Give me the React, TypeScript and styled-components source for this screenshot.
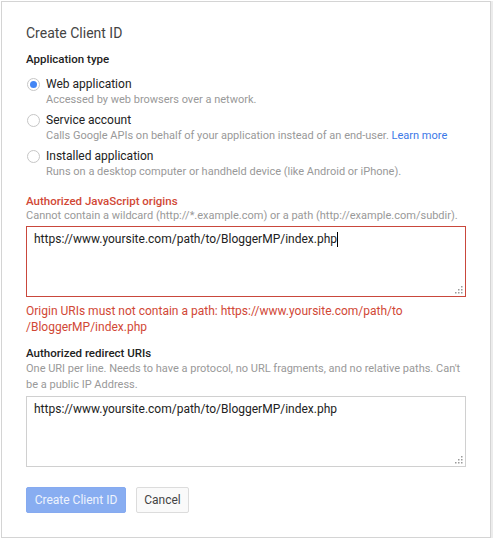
import React from "react";
import styled, { createGlobalStyle } from "styled-components";

const Global = createGlobalStyle`
  html, body { margin: 0; padding: 0; background: #fff; }
  body { font-family: Roboto, "Noto Sans", Arial, sans-serif; color: #222; }
`;

const Dialog = styled.div`
  box-sizing: border-box;
  margin: 1px 0 0 1px;
  width: 490px;
  height: 537px;
  border: 1px solid #d4d4d4;
  box-shadow: 2px 0 0 #ececec;
  padding: 21px 24px 0 24px;
  display: flex;
  flex-direction: column;
`;

const Title = styled.h1`
  margin: 0;
  font-size: 14px;
  font-weight: 400;
  line-height: 20px;
  color: #444;
`;

const SectionLabel = styled.div<{ $error?: boolean; $mt: number }>`
  margin-top: ${(p) => p.$mt}px;
  font-size: 11.5px;
  font-weight: 500;
  line-height: 15px;
  color: ${(p) => (p.$error ? "#d14836" : "#222")};
`;

const RadioList = styled.div`
  margin-top: 9px;
  display: flex;
  flex-direction: column;
  gap: 5px;
`;

const RadioRow = styled.div`
  display: grid;
  grid-template-columns: 20px 1fr;
  align-items: start;
`;

const RadioCircle = styled.span<{ $checked?: boolean }>`
  box-sizing: border-box;
  margin: 2px 0 0 1px;
  width: 13px;
  height: 13px;
  border-radius: 50%;
  border: 1px solid #c6c6c6;
  background: #fff;
  display: flex;
  align-items: center;
  justify-content: center;
  &::after {
    content: "";
    width: 7px;
    height: 7px;
    border-radius: 50%;
    background: ${(p) => (p.$checked ? "#4285f4" : "transparent")};
  }
`;

const RadioText = styled.div`
  display: flex;
  flex-direction: column;
`;

const RadioLabel = styled.span`
  font-size: 12px;
  line-height: 16px;
  color: #222;
`;

const Hint = styled.div<{ $lh?: number }>`
  font-size: 11px;
  line-height: ${(p) => p.$lh ?? 15}px;
  color: #999;
`;

const Link = styled.a`
  color: #3b78e7;
  text-decoration: none;
`;

const TextBox = styled.div<{ $error?: boolean; $mt: number }>`
  box-sizing: border-box;
  margin-top: ${(p) => p.$mt}px;
  width: 440px;
  height: 71px;
  border: 1px solid ${(p) => (p.$error ? "#c9483c" : "#d0d0d0")};
  padding: 4px 2px 2px 7px;
  display: flex;
  flex-direction: column;
  justify-content: space-between;
`;

const BoxText = styled.div`
  font-size: 12px;
  line-height: 16px;
  color: #222;
  display: flex;
  align-items: center;
`;

const Caret = styled.span`
  display: inline-block;
  width: 1px;
  height: 15px;
  background: #000;
`;

const Grip = styled.svg`
  align-self: flex-end;
  width: 8px;
  height: 8px;
`;

const ErrorText = styled.div`
  margin-top: 6px;
  font-size: 12px;
  line-height: 16px;
  color: #d14836;
`;

const Buttons = styled.div`
  margin-top: 20px;
  display: flex;
  gap: 10px;
`;

const Button = styled.button<{ $primary?: boolean }>`
  box-sizing: border-box;
  height: 26px;
  padding: 0;
  white-space: nowrap;
  font-family: Roboto, Arial, sans-serif;
  font-size: 12px;
  border-radius: 2px;
  border: 1px solid ${(p) => (p.$primary ? "#86aaf0" : "#dcdcdc")};
  background: ${(p) => (p.$primary ? "#88adf1" : "#fafafa")};
  color: ${(p) => (p.$primary ? "#eef3fd" : "#444")};
  width: ${(p) => (p.$primary ? 100 : 53)}px;
`;

const GripIcon = () => (
  <Grip viewBox="0 0 8 8">
    {[
      [6, 0],
      [3, 3],
      [6, 3],
      [0, 6],
      [3, 6],
      [6, 6],
    ].map(([x, y]) => (
      <rect key={`${x}-${y}`} x={x} y={y} width="1.5" height="1.5" fill="#9a9a9a" />
    ))}
  </Grip>
);

const url = "https://www.yoursite.com/path/to/BloggerMP/index.php";

export default function App() {
  return (
    <>
      <Global />
      <Dialog>
        <Title>Create Client ID</Title>
        <SectionLabel $mt={9}>Application type</SectionLabel>
        <RadioList>
          <RadioRow>
            <RadioCircle $checked />
            <RadioText>
              <RadioLabel>Web application</RadioLabel>
              <Hint>Accessed by web browsers over a network.</Hint>
            </RadioText>
          </RadioRow>
          <RadioRow>
            <RadioCircle />
            <RadioText>
              <RadioLabel>Service account</RadioLabel>
              <Hint>
                Calls Google APIs on behalf of your application instead of an end-user.{" "}
                <Link href="#">Learn more</Link>
              </Hint>
            </RadioText>
          </RadioRow>
          <RadioRow>
            <RadioCircle />
            <RadioText>
              <RadioLabel>Installed application</RadioLabel>
              <Hint>Runs on a desktop computer or handheld device (like Android or iPhone).</Hint>
            </RadioText>
          </RadioRow>
        </RadioList>
        <SectionLabel $error $mt={15}>
          Authorized JavaScript origins
        </SectionLabel>
        <Hint $lh={14}>
          Cannot contain a wildcard (http://*.example.com) or a path (http://example.com/subdir).
        </Hint>
        <TextBox $error $mt={3}>
          <BoxText>
            {url}
            <Caret />
          </BoxText>
          <GripIcon />
        </TextBox>
        <ErrorText>
          Origin URIs must not contain a path: https://www.yoursite.com/path/to
          <br />
          /BloggerMP/index.php
        </ErrorText>
        <SectionLabel $mt={11}>Authorized redirect URIs</SectionLabel>
        <Hint $lh={16}>
          One URI per line. Needs to have a protocol, no URL fragments, and no relative paths. Can't
          be a public IP Address.
        </Hint>
        <TextBox $mt={3}>
          <BoxText>{url}</BoxText>
          <GripIcon />
        </TextBox>
        <Buttons>
          <Button $primary>Create Client ID</Button>
          <Button>Cancel</Button>
        </Buttons>
      </Dialog>
    </>
  );
}
